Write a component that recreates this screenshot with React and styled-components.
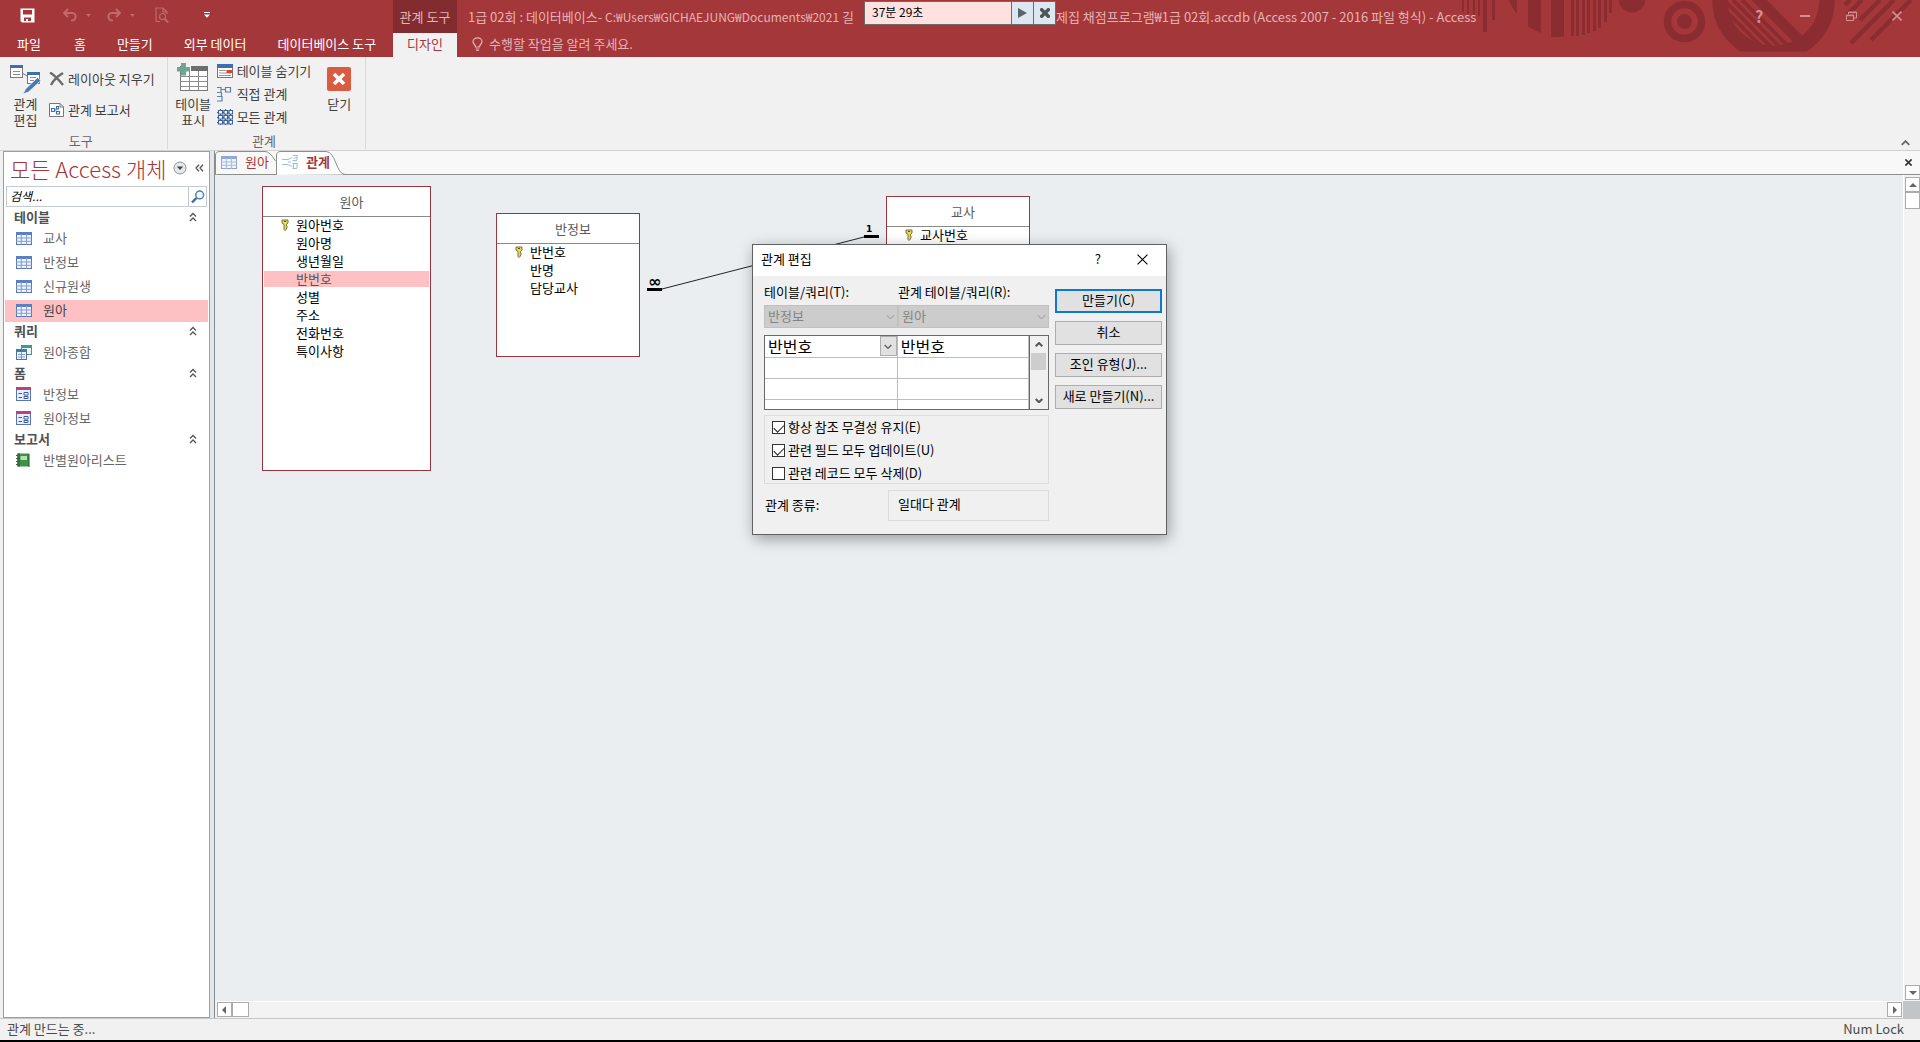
import React from "react";
import styled, { createGlobalStyle, css } from "styled-components";

const RED = "#a4373a";
const DARK_RED = "#8b2d30";

const Global = createGlobalStyle`
  * { box-sizing: border-box; }
  body {
    margin: 0;
    font-family: "Noto Sans CJK KR", "Noto Sans", sans-serif;
    font-size: 13px;
    line-height: 16px;
    color: #222;
    overflow: hidden;
  }
  button, input, select {
    font: inherit;
    color: inherit;
    margin: 0;
    padding: 0;
    border: 0;
    background: none;
    border-radius: 0;
  }
  ul { list-style: none; margin: 0; padding: 0; }
  h1, h2, h3 { margin: 0; font: inherit; }
  svg { display: block; flex: none; }
`;

const Window = styled.div`
  display: flex;
  flex-direction: column;
  height: 100vh;
  background: #f1f1f1;
  border-bottom: 2px solid #000;
`;

/* ---------- Header ---------- */

const Header = styled.header`
  position: relative;
  display: grid;
  grid-template-columns: 393px 64px 1fr;
  grid-template-rows: 33px 24px;
  background: ${RED};
  color: #fff;
`;

const Decoration = styled.svg`
  position: absolute;
  right: 0;
  top: 0;
`;

const QuickBar = styled.div`
  display: flex;
  align-items: center;
  padding: 0 0 3px 12px;
`;

const QuickButton = styled.button`
  display: flex;
  align-items: center;
  justify-content: center;
  width: ${(p) => p.$width}px;
  height: 30px;
  margin-right: ${(p) => p.$after || 0}px;
`;

const ContextTitle = styled.div`
  display: flex;
  align-items: center;
  justify-content: center;
  background: #832c2f;
  color: #e3b4b5;
`;

const TitleBar = styled.div`
  position: relative;
  display: flex;
  align-items: center;
  min-width: 0;
  padding-left: 11px;
  color: #e6b3b4;
`;

const TitlePart = styled.span`
  flex: none;
  white-space: pre;
  width: ${(p) => p.$width || "auto"};
`;

const FilePath = styled.span`
  font-size: 12px;
`;

const Timer = styled.div`
  display: flex;
  flex: none;
  align-self: flex-start;
  width: 192px;
  height: 24px;
  margin-top: 1px;
  border: 1px solid #6d6a6a;
  background: #ffe2e0;
  color: #000;
  font-size: 12px;
`;

const TimerText = styled.span`
  flex: 1;
  padding: 2px 7px;
`;

const TimerButton = styled.button`
  display: flex;
  align-items: center;
  justify-content: center;
  width: 22px;
  border-left: 1px solid #6d6a6a;
  background: #dbe7f1;
`;

const WindowButtons = styled.div`
  display: flex;
  margin-left: auto;
  align-self: flex-start;
`;

const WindowButton = styled.button`
  display: flex;
  align-items: center;
  justify-content: center;
  width: 46px;
  height: 31px;
  color: #d58f91;
  font-weight: 700;
  font-size: 16px;
`;

const Tabs = styled.nav`
  display: flex;
  gap: 1px;
`;

const RibbonTab = styled.button`
  padding: 0 ${(p) => p.$pad || 15}px 3px;
  color: #fff;
  white-space: nowrap;
  ${(p) => p.$active && css`
    background: #f1f1f1;
    color: ${RED};
  `}
`;

const Hint = styled.button`
  display: flex;
  align-items: center;
  gap: 6px;
  padding: 0 0 3px 15px;
  color: #e6b3b4;
`;

/* ---------- Ribbon ---------- */

const Ribbon = styled.section`
  display: flex;
  height: 94px;
  border-bottom: 1px solid #d2d2d2;
  color: #3f3f3f;
`;

const Group = styled.div`
  display: flex;
  flex-direction: column;
  height: 92px;
  padding-left: 7px;
  padding-right: 12px;
  border-right: 1px solid #d9d9d9;
`;

const GroupBody = styled.div`
  display: flex;
  flex: none;
  height: 76px;
`;

const GroupLabel = styled.div`
  text-align: center;
  color: #666;
`;

const BigButton = styled.button`
  display: flex;
  flex-direction: column;
  align-items: center;
  gap: 2px;
  width: ${(p) => p.$width}px;
  margin-left: ${(p) => p.$before || 0}px;
  padding-top: 5px;
`;

const ButtonStack = styled.div`
  display: flex;
  flex-direction: column;
  gap: ${(p) => p.$gap}px;
  padding: ${(p) => p.$top}px 0 0 5px;
`;

const SmallButton = styled.button`
  display: flex;
  align-items: center;
  gap: 4px;
  height: 16px;
  white-space: nowrap;
`;

const CollapseButton = styled.button`
  align-self: flex-end;
  margin-left: auto;
  padding: 4px 10px;
`;

/* ---------- Body ---------- */

const Body = styled.div`
  display: flex;
  flex: 1;
  min-height: 0;
  padding-left: 3px;
  background: #f1f1f1;
`;

const NavPane = styled.aside`
  width: 207px;
  flex: none;
  border: 1px solid #9a9fa3;
  background: #fff;
`;

const Splitter = styled.div`
  width: 5px;
  flex: none;
  background: #e3e7ea;
  border-right: 1px solid #868c90;
`;

const NavHead = styled.div`
  display: flex;
  align-items: center;
  height: 34px;
  padding: 0 5px 2px 6px;
`;

const NavTitle = styled.h2`
  flex: 1;
  color: ${RED};
  font-size: 22px;
  font-weight: 300;
  line-height: 32px;
  white-space: nowrap;
`;

const NavMenu = styled.button`
  margin-right: 8px;
`;

const SearchBox = styled.form`
  display: flex;
  height: 21px;
  margin: 0 2px 1px;
  border: 1px solid #c3cbd1;
`;

const SearchInput = styled.input`
  flex: 1;
  min-width: 0;
  padding: 0 0 2px 3px;
  font-style: italic;
  font-size: 12px;
  outline: none;
  &::placeholder { color: #000; opacity: 1; }
`;

const SearchButton = styled.button`
  display: flex;
  align-items: center;
  justify-content: center;
  width: 18px;
  border-left: 1px solid #c3cbd1;
`;

const NavHeading = styled.button`
  display: flex;
  align-items: center;
  justify-content: space-between;
  width: 100%;
  height: 18px;
  padding: 0 12px 0 10px;
  color: #505050;
  font-weight: 700;
`;

const NavItem = styled.button`
  display: grid;
  grid-template-columns: 16px 1fr;
  align-items: center;
  column-gap: 11px;
  width: calc(100% - 2px);
  height: 22px;
  margin: 2px 1px 0;
  padding: 0 0 2px 11px;
  text-align: left;
  color: ${(p) => (p.$selected ? "#444" : "#666")};
  background: ${(p) => (p.$selected ? "#fdc1c4" : "none")};
`;

const Doc = styled.main`
  display: flex;
  flex-direction: column;
  flex: 1;
  min-width: 0;
`;

const DocTabs = styled.div`
  display: flex;
  height: 24px;
  background: #f8f8f8;
  border-bottom: 1px solid #8b908d;
`;

const DocTab = styled.button`
  position: relative;
  display: flex;
  align-items: center;
  gap: 8px;
  width: ${(p) => p.$width}px;
  height: 24px;
  padding: 0 0 2px 6px;
  color: ${RED};
  font-weight: ${(p) => (p.$active ? 700 : 400)};
  & > * { z-index: 1; }
`;

const TabShape = styled.svg`
  position: absolute;
  left: 0;
  top: 0;
  && { z-index: 0; }
`;

const DocClose = styled.button`
  margin-left: auto;
  padding: 0 8px;
`;

const Viewport = styled.div`
  display: grid;
  flex: 1;
  min-height: 0;
  grid-template-columns: 1fr 17px;
  grid-template-rows: 1fr 17px;
`;

const Canvas = styled.div`
  position: relative;
  overflow: hidden;
  background: #eaeef1;
`;

const Links = styled.svg`
  position: absolute;
  left: 0;
  top: 0;
`;

const EndLabel = styled.span`
  position: absolute;
  left: ${(p) => p.$x}px;
  top: ${(p) => p.$y}px;
  color: #000;
  font-family: "DejaVu Sans", sans-serif;
  font-weight: 700;
  font-size: ${(p) => p.$size}px;
  line-height: 12px;
`;

const TableNode = styled.section`
  position: absolute;
  left: ${(p) => p.$x}px;
  top: ${(p) => p.$y}px;
  width: ${(p) => p.$w}px;
  height: ${(p) => p.$h}px;
  border: 1px solid #963640;
  background: #fff;
`;

const NodeTitle = styled.h3`
  height: 30px;
  padding-left: 10px;
  line-height: 29px;
  border-bottom: 1px solid #8a8a8a;
  text-align: center;
  color: #5a5a5a;
`;

const Field = styled.li`
  display: grid;
  grid-template-columns: 15px 1fr;
  align-items: center;
  height: 16px;
  margin: 0 1px 2px;
  padding-left: 17px;
  color: ${(p) => (p.$selected ? "#555" : "#000")};
  background: ${(p) => (p.$selected ? "#fdc1c4" : "none")};
`;

const FieldName = styled.span`
  grid-column: 2;
`;

const Scroll = styled.div`
  display: flex;
  flex-direction: ${(p) => (p.$vertical ? "column" : "row")};
  justify-content: space-between;
  padding: ${(p) => (p.$vertical ? "2px 1px 1px" : "0 1px 1px 2px")};
  background: #f3f3f3;
  border: 0 solid #fff;
  border-width: ${(p) => (p.$vertical ? "0 0 0 1px" : "1px 0 0 0")};
`;

const ScrollStart = styled.div`
  display: flex;
  flex-direction: ${(p) => (p.$vertical ? "column" : "row")};
`;

const ScrollButton = styled.button`
  display: flex;
  align-items: center;
  justify-content: center;
  width: 15px;
  height: 15px;
  border: 1px solid #ababab;
  background: #fff;
`;

const ScrollThumb = styled.div`
  width: ${(p) => (p.$vertical ? 15 : 17)}px;
  height: ${(p) => (p.$vertical ? 17 : 15)}px;
  border: 1px solid #ababab;
  background: #fff;
`;

const Corner = styled.div`
  background: #c1c5c8;
`;

const StatusBar = styled.footer`
  display: flex;
  align-items: center;
  justify-content: space-between;
  height: 22px;
  padding: 0 16px 2px 7px;
  border-top: 1px solid #c6c6c6;
  color: #4a4a4a;
`;

/* ---------- Dialog ---------- */

const Dialog = styled.section`
  position: absolute;
  left: 537px;
  top: 69px;
  width: 415px;
  border: 1px solid #5f6264;
  background: #f0f0f0;
  color: #000;
  box-shadow: 2px 4px 14px rgba(0, 0, 0, 0.35);
`;

const DialogHead = styled.header`
  display: flex;
  align-items: center;
  height: 31px;
  padding: 0 18px 3px 8px;
  background: #fff;
`;

const DialogTitle = styled.h2`
  flex: 1;
`;

const HeadButton = styled.button`
  margin-left: 36px;
`;

const DialogBody = styled.div`
  display: grid;
  grid-template-columns: 285px 107px;
  gap: 6px;
  padding: 8px 4px 13px 11px;
`;

const FieldPair = styled.div`
  display: grid;
  grid-template-columns: 134px 151px;
`;

const ComboLabel = styled.label`
  height: 21px;
  line-height: 16px;
  white-space: nowrap;
`;

const ComboWrap = styled.div`
  position: relative;
  svg {
    position: absolute;
    right: 3px;
    top: 50%;
    margin-top: -3px;
    pointer-events: none;
  }
`;

const Combo = styled.select`
  appearance: none;
  width: 100%;
  height: 23px;
  padding: 0 3px 2px;
  border: 1px solid #c0c0c0;
  background: #cccccc;
  color: #838383;
  opacity: 1;
`;

const GridBox = styled.div`
  display: flex;
  height: 75px;
  margin-top: 7px;
  border: 1px solid #696969;
  background: #fff;
  overflow: hidden;
`;

const JoinTable = styled.table`
  flex: 1;
  height: 84px;
  border-collapse: collapse;
  table-layout: fixed;
  font-size: 16px;
`;

const Cell = styled.td`
  position: relative;
  height: 21px;
  padding: 0 0 0 3px;
  border-right: 1px solid #bdbdbd;
  border-bottom: 1px solid #bdbdbd;
  line-height: 20px;
`;

const CellSelect = styled.select`
  display: block;
  appearance: none;
  width: 100%;
  height: 20px;
  outline: none;
`;

const CellArrow = styled.span`
  position: absolute;
  right: 0;
  top: 0;
  display: flex;
  align-items: center;
  justify-content: center;
  width: 17px;
  height: 20px;
  border: 1px solid #adadad;
  background: #e1e1e1;
  pointer-events: none;
`;

const GridScroll = styled.div`
  display: flex;
  flex-direction: column;
  align-items: center;
  width: 19px;
  padding-right: 1px;
  border-left: 1px solid #696969;
  background: #f0f0f0;
`;

const GridScrollButton = styled.button`
  display: flex;
  align-items: center;
  justify-content: center;
  height: 17px;
`;

const GridThumb = styled.div`
  width: 15px;
  height: 17px;
  margin-bottom: auto;
  background: #cdcdcd;
`;

const Options = styled.fieldset`
  display: flex;
  flex-direction: column;
  gap: 7px;
  min-width: 0;
  margin: 5px 0 6px;
  padding: 3px 7px 2px;
  border: 1px solid #dcdcdc;
`;

const Option = styled.label`
  display: flex;
  align-items: center;
  gap: 3px;
`;

const Check = styled.input`
  appearance: none;
  width: 13px;
  height: 13px;
  border: 1px solid #333;
  background: #fff;
  display: grid;
  &:checked::before {
    content: "";
    width: 9px;
    height: 5px;
    margin: 2px 1px;
    border: solid #222;
    border-width: 0 0 1px 1px;
    transform: rotate(-45deg);
  }
`;

const KindRow = styled.div`
  display: flex;
  align-items: center;
  justify-content: space-between;
  padding-left: 1px;
`;

const KindLabel = styled.label`
  padding-bottom: 2px;
`;

const KindValue = styled.output`
  width: 161px;
  height: 31px;
  padding: 5px 9px;
  border: 1px solid #dcdcdc;
`;

const Actions = styled.div`
  display: flex;
  flex-direction: column;
  gap: 8px;
  padding-top: 5px;
`;

const Action = styled.button`
  height: 24px;
  padding-bottom: 2px;
  border: ${(p) => (p.$default ? "2px solid #0e78d0" : "1px solid #adadad")};
  background: #e1e1e1;
  white-space: nowrap;
`;

/* ---------- Icons ---------- */

const Chevron = ({ dir = "down", size = 8, color = "#555", w = 1.5 }) => {
  const d = dir === "down" ? "M0.7 1 L4 4.3 L7.3 1" : "M0.7 4.3 L4 1 L7.3 4.3";
  return (
    <svg width={size} height={(size * 5) / 8} viewBox="0 0 8 5" fill="none" stroke={color} strokeWidth={w}>
      <path d={d} />
    </svg>
  );
};

const Triangle = ({ dir, color = "#666" }) => {
  const points = {
    up: "0,6 4,2 8,6",
    down: "0,2 8,2 4,6",
    left: "5,0 1,4 5,8",
    right: "2,0 6,4 2,8",
  };
  return (
    <svg width="8" height="8" viewBox="0 0 8 8">
      <polygon points={points[dir]} fill={color} />
    </svg>
  );
};

const Cross = ({ size = 10, color = "#000", w = 1 }) => (
  <svg width={size} height={size} viewBox="0 0 10 10" stroke={color} strokeWidth={w}>
    <path d="M0.5 0.5 L9.5 9.5 M9.5 0.5 L0.5 9.5" />
  </svg>
);

const DoubleUp = () => (
  <svg width="8" height="10" viewBox="0 0 8 10" fill="none" stroke="#555" strokeWidth="1.3">
    <path d="M1 4.5 L4 1.5 L7 4.5 M1 9 L4 6 L7 9" />
  </svg>
);

const SaveIcon = () => (
  <svg width="15" height="15" viewBox="0 0 15 15">
    <path d="M0.5 0.5 H14.5 V14.5 H2 L0.5 13 Z" fill="#fff" />
    <path d="M3 2 H12 V6.5 H3 Z" fill={RED} />
    <path d="M4 9.5 H11 V13 H8 V11 H6 V13 H4 Z" fill={RED} />
  </svg>
);

const UndoIcon = ({ flip }) => (
  <svg width="16" height="14" viewBox="0 0 16 14" fill="none" stroke="#c2696c" strokeWidth="2">
    <g transform={flip ? "translate(16 0) scale(-1 1)" : undefined}>
      <path d="M6 1 L2 5 L6 9 M2 5 H10 C15 5 15 12.5 9 12.5" />
    </g>
  </svg>
);

const Caret = ({ color = "#c2696c" }) => (
  <svg width="5" height="3" viewBox="0 0 5 3"><path d="M0 0 H5 L2.5 3 Z" fill={color} /></svg>
);

const PreviewIcon = () => (
  <svg width="14" height="16" viewBox="0 0 14 16" fill="none" stroke="#c2696c" strokeWidth="1.2">
    <path d="M5 14.5 H1 V1 H8 L12 5 V7 M8 1 V5 H12" />
    <circle cx="7.5" cy="9.5" r="3" />
    <path d="M9.8 12 L13 15.4" strokeWidth="2" />
  </svg>
);

const CustomizeIcon = () => (
  <svg width="6" height="6" viewBox="0 0 6 6" fill="#fff"><path d="M0 0 H6 V1 H0 Z M0 2.5 H6 L3 5.8 Z" /></svg>
);

const BulbIcon = () => (
  <svg width="11" height="14" viewBox="0 0 11 14" fill="none" stroke="#e6b3b4" strokeWidth="1.2">
    <path d="M3.5 10 C3.5 7.5 1 7 1 4.6 C1 2.4 3 0.8 5.5 0.8 C8 0.8 10 2.4 10 4.6 C10 7 7.5 7.5 7.5 10 Z M3.7 12 H7.3 M4.3 13.5 H6.7" />
  </svg>
);

const RestoreIcon = () => (
  <svg width="11" height="10" viewBox="0 0 11 10" fill="none" stroke="#d58f91" strokeWidth="1">
    <path d="M0.5 4 H7.5 V9.5 H0.5 Z M0.5 4.7 H7.5 M2.5 3.5 V1 H10.5 V7 H8 M2.5 1.6 H10.5" />
  </svg>
);

const EditRelationsIcon = () => (
  <svg width="32" height="32" viewBox="0 0 32 32">
    <rect x="0.5" y="3.5" width="12" height="12" fill="#fff" stroke="#7a7a7a" />
    <rect x="0" y="3" width="13" height="3" fill="#3f6eae" />
    <path d="M3 9.5 H10 M3 12.5 H10" stroke="#8c8c8c" />
    <path d="M13 11.5 L18 14.5" stroke="#777" />
    <rect x="17.5" y="10.5" width="12" height="11" fill="#fff" stroke="#7a7a7a" />
    <rect x="17" y="10" width="13" height="3" fill="#3f6eae" />
    <path d="M20 15.5 H26 M20 18.5 H24" stroke="#8c8c8c" />
    <path d="M27.5 15.5 L31 18.5 L18.5 30 L13 32 L15.5 27 Z" fill="#4a7ab8" stroke="#f1f1f1" strokeWidth="0.8" />
  </svg>
);

const ClearIcon = () => (
  <svg width="15" height="14" viewBox="0 0 15 14">
    <path d="M1 0.5 C5 3 10 8 14 13 M14 1 C9 4 4 9 2 13" fill="none" stroke="#6b6b6b" strokeWidth="2.4" />
  </svg>
);

const ReportIcon = () => (
  <svg width="15" height="14" viewBox="0 0 15 14" fill="none">
    <path d="M0.5 0.5 H11 L14.5 4 V13.5 H0.5 Z" fill="#fff" stroke="#777" />
    <path d="M11 0.5 V4 H14.5" stroke="#777" />
    <path d="M2.5 5.5 H5.5 V8.5 H2.5 Z M7.5 3.5 H9.5 V6 H7.5 Z M7.5 8.5 H10.5 V11 H7.5 Z M5.5 7 H7.5" stroke="#3f6eae" strokeWidth="1.2" />
  </svg>
);

const ShowTableIcon = () => (
  <svg width="32" height="32" viewBox="0 0 32 32">
    <rect x="3.5" y="4.5" width="27" height="24" fill="#fff" stroke="#7a7a7a" />
    <rect x="3" y="4" width="28" height="5" fill="#6e6e6e" />
    <path d="M3 14.5 H31 M3 19.5 H31 M3 24.5 H31 M12.5 9 V28 M21.5 9 V28" stroke="#8c8c8c" />
    <path d="M4 4 H14 V9 H10 V14 H4 Z" fill="#f6f6f6" />
    <path d="M4 1 H9 V5 H13 V9.5 H9 V13.5 H4 V9.5 H0 V5 H4 Z" fill="#6fa593" />
  </svg>
);

const HideTableIcon = () => (
  <svg width="16" height="14" viewBox="0 0 16 14">
    <rect x="0.5" y="0.5" width="15" height="13" fill="#fff" stroke="#777" />
    <rect width="16" height="4" fill="#3f6eae" />
    <path d="M2 6.5 H9 M2 9 H14 M2 11.5 H14" stroke="#999" />
    <rect x="9.5" y="6" width="6" height="3" fill="#d9432f" />
  </svg>
);

const DirectIcon = () => (
  <svg width="16" height="16" viewBox="0 0 16 16" fill="none" stroke="#5f7fa8" strokeWidth="1.2">
    <path d="M0 1.5 H4 V6.5 H0 M4 3.5 H8.5 M8.5 1.5 H13.5 V6 H8.5 Z M0 10.5 H5 V15 H0 M4.5 6.5 V10.5" />
  </svg>
);

const AllIcon = () => (
  <svg width="16" height="16" viewBox="0 0 16 16" fill="#fff" stroke="#3d6299">
    <path d="M0 3.5 H16 M0 8.5 H16 M0 13.5 H16 M3.5 0 V16 M8.5 0 V16 M13.5 0 V16" />
    <path d="M1.5 1.5 H5.5 V5 H1.5 Z M7 1.5 H10.5 V5 H7 Z M12 1.5 H15.5 V5 H12 Z M1.5 6.5 H5.5 V10 H1.5 Z M7 6.5 H10.5 V10 H7 Z M12 6.5 H15.5 V10 H12 Z M1.5 11.5 H5.5 V15 H1.5 Z M7 11.5 H10.5 V15 H7 Z M12 11.5 H15.5 V15 H12 Z" strokeWidth="1.2" />
  </svg>
);

const CloseIcon = () => (
  <svg width="24" height="32" viewBox="0 0 24 32">
    <rect y="5" width="24" height="24" rx="2" fill="#d95b41" />
    <path d="M7 12 L17 22 M17 12 L7 22" stroke="#fff" strokeWidth="3.6" />
  </svg>
);

const TableIcon = ({ faded }) => (
  <svg width="16" height="13" viewBox="0 0 16 13" opacity={faded ? 0.65 : 1}>
    <rect x="0.5" y="0.5" width="15" height="12" fill="#eef4fd" stroke="#5874b5" />
    <rect width="16" height="3" fill="#5b7dc4" />
    <path d="M0 6 H16 M0 9.3 H16 M5.3 2 V13 M10.6 2 V13" stroke="#7f9bd0" />
  </svg>
);

const QueryIcon = () => (
  <svg width="16" height="15" viewBox="0 0 16 15">
    <rect x="5.5" y="0.5" width="10" height="9" fill="#eef7f8" stroke="#4b8f92" />
    <rect x="5" y="0" width="11" height="3" fill="#3f9a93" />
    <rect x="0.5" y="4.5" width="10" height="10" fill="#eef4fd" stroke="#4f73a8" />
    <rect x="0" y="4" width="11" height="3" fill="#3e7f9a" />
    <path d="M2 9.5 H9 M2 12 H9 M5.5 7 V14" stroke="#7f9bd0" />
  </svg>
);

const FormIcon = () => (
  <svg width="15" height="14" viewBox="0 0 15 14">
    <rect x="0.5" y="0.5" width="14" height="13" fill="#e6eefb" stroke="#5874b5" />
    <rect width="15" height="3" fill="#b9447c" />
    <path d="M2.5 6.5 H6 M2.5 10.5 H6" stroke="#44598a" />
    <path d="M8 5.5 H12 V8 H8 Z M8 9.5 H12 V11.5 H8 Z" fill="#fff" stroke="#3d5a9e" />
  </svg>
);

const BookIcon = () => (
  <svg width="14" height="14" viewBox="0 0 14 14">
    <rect x="1" y="0.5" width="12" height="13" fill="#3f9148" />
    <rect x="4.5" y="3" width="6.5" height="4" fill="#b6deb2" />
    <path d="M3 0 V14 M13 1 V14" stroke="#1f5a28" />
    <path d="M0 2.5 H2.5 M0 5.5 H2.5 M0 8.5 H2.5 M0 11.5 H2.5" stroke="#555" />
  </svg>
);

const RelationIcon = () => (
  <svg width="16" height="14" viewBox="0 0 16 14" fill="none" stroke="#9dbbe0">
    <path d="M0 4.5 H6 M0 9.5 H6 M6 4.5 L10 2.5 M6 9.5 L10 11.5 M6 7 H9 M10.5 0.5 H15.5 M15 0 V5 M10.5 5.5 H15 M10.5 8.5 H15.5 M15 8 V13 M10.5 13.5 H15 M11.5 9 V13 M11.5 3 H15" />
  </svg>
);

const SearchIcon = () => (
  <svg width="14" height="14" viewBox="0 0 14 14" fill="none">
    <path d="M1 12.5 L5.5 8" stroke="#44699b" strokeWidth="2.4" />
    <circle cx="8.7" cy="4.9" r="3.9" fill="#eef6ff" stroke="#4d79b8" strokeWidth="1.4" />
  </svg>
);

const RoundMenuIcon = () => (
  <svg width="14" height="14" viewBox="0 0 14 14">
    <circle cx="7" cy="7" r="6" fill="#e6e8ea" stroke="#8e9397" />
    <path d="M3.8 5.5 H10.2 L7 9 Z" fill="#444" />
  </svg>
);

const DoubleLeft = () => (
  <svg width="9" height="8" viewBox="0 0 9 8" fill="none" stroke="#555" strokeWidth="1.3">
    <path d="M4 0.7 L1 4 L4 7.3 M8 0.7 L5 4 L8 7.3" />
  </svg>
);

const KeyIcon = () => (
  <svg width="8" height="12" viewBox="0 0 8 12">
    <path d="M1 1 H7 V4 L5.5 5.5 V7 L6.5 8 L5.5 9 V10 L4 11.5 L3 10.5 V5.5 L1 4 Z" fill="#e8d768" stroke="#6f6420" strokeWidth="0.9" />
    <path d="M3 2.5 H5" stroke="#5e5416" />
  </svg>
);

const PlayIcon = () => (
  <svg width="9" height="10" viewBox="0 0 9 10"><path d="M0 0 L9 5 L0 10 Z" fill="#5d6468" /></svg>
);

const HeaderArt = () => (
  <Decoration width="460" height="57" viewBox="1460 0 460 57" fill={DARK_RED} aria-hidden="true">
    <path d="M1462 0 h2 v12 h-2z M1467 0 h2 v14 h-2z M1473 0 h2 v15 h-2z M1478 0 h2 v16 h-2z M1483 0 h4 v32 h-4z M1492 0 h3 v20 h-3z" />
    <path d="M1509 0 H1517 V14 Q1512 8 1509 0Z M1528 0 H1541 V33 L1528 27Z M1551 0 H1564 V37 H1551Z" />
    <path d="M1571 0h3v36h-3z M1576 0h3v36h-3z M1582 0h3v35h-3z M1587 0h3v33h-3z M1593 0h3v31h-3z M1598 0h3v28h-3z M1604 0h3v22h-3z M1609 0h3v13h-3z" />
    <circle cx="1632" cy="-1" r="13.5" />
    <circle cx="1684.5" cy="21.5" r="17" fill="none" stroke={DARK_RED} strokeWidth="7.5" />
    <circle cx="1684.5" cy="21.5" r="7.5" />
    <clipPath id="ringClip"><rect x="1700" y="0" width="150" height="51.5" /></clipPath>
    <clipPath id="innerClip"><circle cx="1773.5" cy="0" r="46" /></clipPath>
    <g clipPath="url(#ringClip)">
      <circle cx="1773.5" cy="0" r="53.5" fill="none" stroke={DARK_RED} strokeWidth="15.5" />
      <g clipPath="url(#innerClip)" stroke={DARK_RED} strokeWidth="4">
        <path d="M1715 0 l55 55 M1724 0 l55 55 M1733 0 l55 55 M1742 0 l55 55" />
        <path d="M1755 -4 l55 55" strokeWidth="11" />
      </g>
    </g>
    <path d="M1851 43 L1894 0 M1871 40 L1911 0 M1860 20 L1880 0 M1845 5 L1850 0 M1847 15 L1862 0" fill="none" stroke={DARK_RED} strokeWidth="4.5" />
  </Decoration>
);

/* ---------- Data ---------- */

const navGroups = [
  { title: "테이블", icon: TableIcon, items: ["교사", "반정보", "신규원생", "원아"], selected: "원아" },
  { title: "쿼리", icon: QueryIcon, items: ["원아종합"] },
  { title: "폼", icon: FormIcon, items: ["반정보", "원아정보"] },
  { title: "보고서", icon: BookIcon, items: ["반별원아리스트"] },
];

const nodes = [
  { title: "원아", x: 47, y: 11, w: 169, h: 285, selected: "반번호", fields: ["원아번호", "원아명", "생년월일", "반번호", "성별", "주소", "전화번호", "특이사항"] },
  { title: "반정보", x: 281, y: 38, w: 144, h: 144, fields: ["반번호", "반명", "담당교사"] },
  { title: "교사", x: 671, y: 21, w: 144, h: 144, fields: ["교사번호"] },
];

const menuTabs = ["홈", "만들기", "외부 데이터", "데이터베이스 도구"];

const options = [
  { label: "항상 참조 무결성 유지(E)", checked: true },
  { label: "관련 필드 모두 업데이트(U)", checked: true },
  { label: "관련 레코드 모두 삭제(D)", checked: false },
];

/* ---------- Sections ---------- */

function AppHeader() {
  return (
    <Header>
      <HeaderArt />
      <QuickBar>
        <QuickButton $width={30} $after={20} aria-label="저장"><SaveIcon /></QuickButton>
        <QuickButton $width={16} $after={6} aria-label="실행 취소"><UndoIcon /></QuickButton>
        <QuickButton $width={9} $after={13} aria-label="실행 취소 목록"><Caret /></QuickButton>
        <QuickButton $width={16} $after={6} aria-label="다시 실행"><UndoIcon flip /></QuickButton>
        <QuickButton $width={9} $after={17} aria-label="다시 실행 목록"><Caret /></QuickButton>
        <QuickButton $width={16} $after={29} aria-label="인쇄 미리 보기"><PreviewIcon /></QuickButton>
        <QuickButton $width={16} aria-label="사용자 지정"><CustomizeIcon /></QuickButton>
      </QuickBar>
      <ContextTitle>관계 도구</ContextTitle>
      <TitleBar>
        <TitlePart $width="396px">
          1급 02회 : 데이터베이스- <FilePath>C:₩Users₩GICHAEJUNG₩Documents₩2021</FilePath> 길
        </TitlePart>
        <Timer>
          <TimerText>37분 29초</TimerText>
          <TimerButton aria-label="시작"><PlayIcon /></TimerButton>
          <TimerButton aria-label="종료"><Cross size={10} color="#4f565a" w={3.4} /></TimerButton>
        </Timer>
        <TitlePart>제집 채점프로그램₩1급 02회.accdb (Access 2007 - 2016 파일 형식) - Access</TitlePart>
        <WindowButtons>
          <WindowButton>?</WindowButton>
          <WindowButton aria-label="최소화">
            <svg width="10" height="2"><rect width="10" height="2" fill="#d58f91" /></svg>
          </WindowButton>
          <WindowButton aria-label="이전 크기로"><RestoreIcon /></WindowButton>
          <WindowButton aria-label="닫기"><Cross size={10} color="#d58f91" w={1.6} /></WindowButton>
        </WindowButtons>
      </TitleBar>
      <Tabs>
        <RibbonTab $pad={17}>파일</RibbonTab>
        {menuTabs.map((t) => <RibbonTab key={t}>{t}</RibbonTab>)}
      </Tabs>
      <RibbonTab $active $pad={12}>디자인</RibbonTab>
      <Tabs>
        <Hint><BulbIcon />수행할 작업을 알려 주세요.</Hint>
      </Tabs>
    </Header>
  );
}

function AppRibbon() {
  return (
    <Ribbon>
      <Group>
        <GroupBody>
          <BigButton $width={37}><EditRelationsIcon />관계<br />편집</BigButton>
          <ButtonStack $top={14} $gap={15}>
            <SmallButton><ClearIcon />레이아웃 지우기</SmallButton>
            <SmallButton><ReportIcon />관계 보고서</SmallButton>
          </ButtonStack>
        </GroupBody>
        <GroupLabel>도구</GroupLabel>
      </Group>
      <Group>
        <GroupBody>
          <BigButton $width={37}><ShowTableIcon />테이블<br />표시</BigButton>
          <ButtonStack $top={6} $gap={7}>
            <SmallButton><HideTableIcon />테이블 숨기기</SmallButton>
            <SmallButton><DirectIcon />직접 관계</SmallButton>
            <SmallButton><AllIcon />모든 관계</SmallButton>
          </ButtonStack>
          <BigButton $width={28} $before={14}><CloseIcon />닫기</BigButton>
        </GroupBody>
        <GroupLabel>관계</GroupLabel>
      </Group>
      <CollapseButton aria-label="리본 메뉴 축소"><Chevron dir="up" size={9} color="#666" w={1.6} /></CollapseButton>
    </Ribbon>
  );
}

function Navigation() {
  return (
    <NavPane>
      <NavHead>
        <NavTitle>모든 Access 개체</NavTitle>
        <NavMenu aria-label="범주 선택"><RoundMenuIcon /></NavMenu>
        <button aria-label="탐색 창 닫기"><DoubleLeft /></button>
      </NavHead>
      <SearchBox>
        <SearchInput placeholder="검색..." aria-label="검색" />
        <SearchButton type="button" aria-label="찾기"><SearchIcon /></SearchButton>
      </SearchBox>
      {navGroups.map(({ title, icon: Icon, items, selected }) => (
        <div key={title}>
          <NavHeading>{title}<DoubleUp /></NavHeading>
          {items.map((name) => (
            <NavItem key={name} $selected={name === selected}><Icon />{name}</NavItem>
          ))}
        </div>
      ))}
    </NavPane>
  );
}

function RelationDialog() {
  return (
    <Dialog role="dialog" aria-label="관계 편집">
      <DialogHead>
        <DialogTitle>관계 편집</DialogTitle>
        <HeadButton>?</HeadButton>
        <HeadButton aria-label="닫기"><Cross size={11} /></HeadButton>
      </DialogHead>
      <DialogBody>
        <div>
          <FieldPair>
            <ComboLabel htmlFor="leftTable">테이블/쿼리(T):</ComboLabel>
            <ComboLabel htmlFor="rightTable">관계 테이블/쿼리(R):</ComboLabel>
            <ComboWrap>
              <Combo id="leftTable" disabled><option>반정보</option></Combo>
              <Chevron size={9} color="#a8a8a8" w={1} />
            </ComboWrap>
            <ComboWrap>
              <Combo id="rightTable" disabled><option>원아</option></Combo>
              <Chevron size={9} color="#a8a8a8" w={1} />
            </ComboWrap>
          </FieldPair>
          <GridBox>
            <JoinTable>
              <tbody>
                <tr>
                  <Cell>
                    <CellSelect aria-label="필드"><option>반번호</option></CellSelect>
                    <CellArrow><Chevron size={8} w={1.2} /></CellArrow>
                  </Cell>
                  <Cell>반번호</Cell>
                </tr>
                <tr><Cell /><Cell /></tr>
                <tr><Cell /><Cell /></tr>
                <tr><Cell /><Cell /></tr>
              </tbody>
            </JoinTable>
            <GridScroll>
              <GridScrollButton aria-label="위로"><Chevron dir="up" w={2} /></GridScrollButton>
              <GridThumb />
              <GridScrollButton aria-label="아래로"><Chevron w={2} /></GridScrollButton>
            </GridScroll>
          </GridBox>
          <Options>
            {options.map((o) => (
              <Option key={o.label}><Check type="checkbox" defaultChecked={o.checked} />{o.label}</Option>
            ))}
          </Options>
          <KindRow>
            <KindLabel htmlFor="kind">관계 종류:</KindLabel>
            <KindValue id="kind">일대다 관계</KindValue>
          </KindRow>
        </div>
        <Actions>
          <Action $default>만들기(C)</Action>
          <Action>취소</Action>
          <Action>조인 유형(J)...</Action>
          <Action>새로 만들기(N)...</Action>
        </Actions>
      </DialogBody>
    </Dialog>
  );
}

function Document() {
  return (
    <Doc>
      <DocTabs>
        <DocTab $width={61}>
          <TabShape width="61" height="24" fill="#f8f8f8" stroke="#8b908d">
            <path d="M0.5 23.5 V4 Q0.5 0.5 5 0.5 H50 Q55 0.5 60.5 10" />
          </TabShape>
          <TableIcon faded /><span>원아</span>
        </DocTab>
        <DocTab $width={70} $active>
          <TabShape width="70" height="24" fill="#fff" stroke="#8b908d">
            <path d="M0.5 24 V4 Q0.5 0.5 5 0.5 H50 C60 0.5 60 23.5 69 23.5" />
          </TabShape>
          <RelationIcon /><span>관계</span>
        </DocTab>
        <DocClose aria-label="문서 닫기"><Cross size={7} color="#333" w={2.4} /></DocClose>
      </DocTabs>
      <Viewport>
        <Canvas>
          <Links width="700" height="150">
            <path d="M447 114 L649 62" stroke="#222" fill="none" />
            <path d="M432 114.5 H447 M649 61.5 H664" stroke="#000" strokeWidth="3" />
          </Links>
          <EndLabel $x={433} $y={101} $size={16}>∞</EndLabel>
          <EndLabel $x={651} $y={48} $size={9}>1</EndLabel>
          {nodes.map((n) => (
            <TableNode key={n.title} $x={n.x} $y={n.y} $w={n.w} $h={n.h}>
              <NodeTitle>{n.title}</NodeTitle>
              <ul>
                {n.fields.map((f, i) => (
                  <Field key={f} $selected={f === n.selected}>
                    {i === 0 && <KeyIcon />}
                    <FieldName>{f}</FieldName>
                  </Field>
                ))}
              </ul>
            </TableNode>
          ))}
          <RelationDialog />
        </Canvas>
        <Scroll $vertical>
          <ScrollStart $vertical>
            <ScrollButton aria-label="위로"><Triangle dir="up" /></ScrollButton>
            <ScrollThumb $vertical />
          </ScrollStart>
          <ScrollButton aria-label="아래로"><Triangle dir="down" /></ScrollButton>
        </Scroll>
        <Scroll>
          <ScrollStart>
            <ScrollButton aria-label="왼쪽으로"><Triangle dir="left" /></ScrollButton>
            <ScrollThumb />
          </ScrollStart>
          <ScrollButton aria-label="오른쪽으로"><Triangle dir="right" /></ScrollButton>
        </Scroll>
        <Corner />
      </Viewport>
    </Doc>
  );
}

export default function App() {
  return (
    <>
      <Global />
      <Window>
        <AppHeader />
        <AppRibbon />
        <Body>
          <Navigation />
          <Splitter />
          <Document />
        </Body>
        <StatusBar>
          <span>관계 만드는 중...</span>
          <span>Num Lock</span>
        </StatusBar>
      </Window>
    </>
  );
}
